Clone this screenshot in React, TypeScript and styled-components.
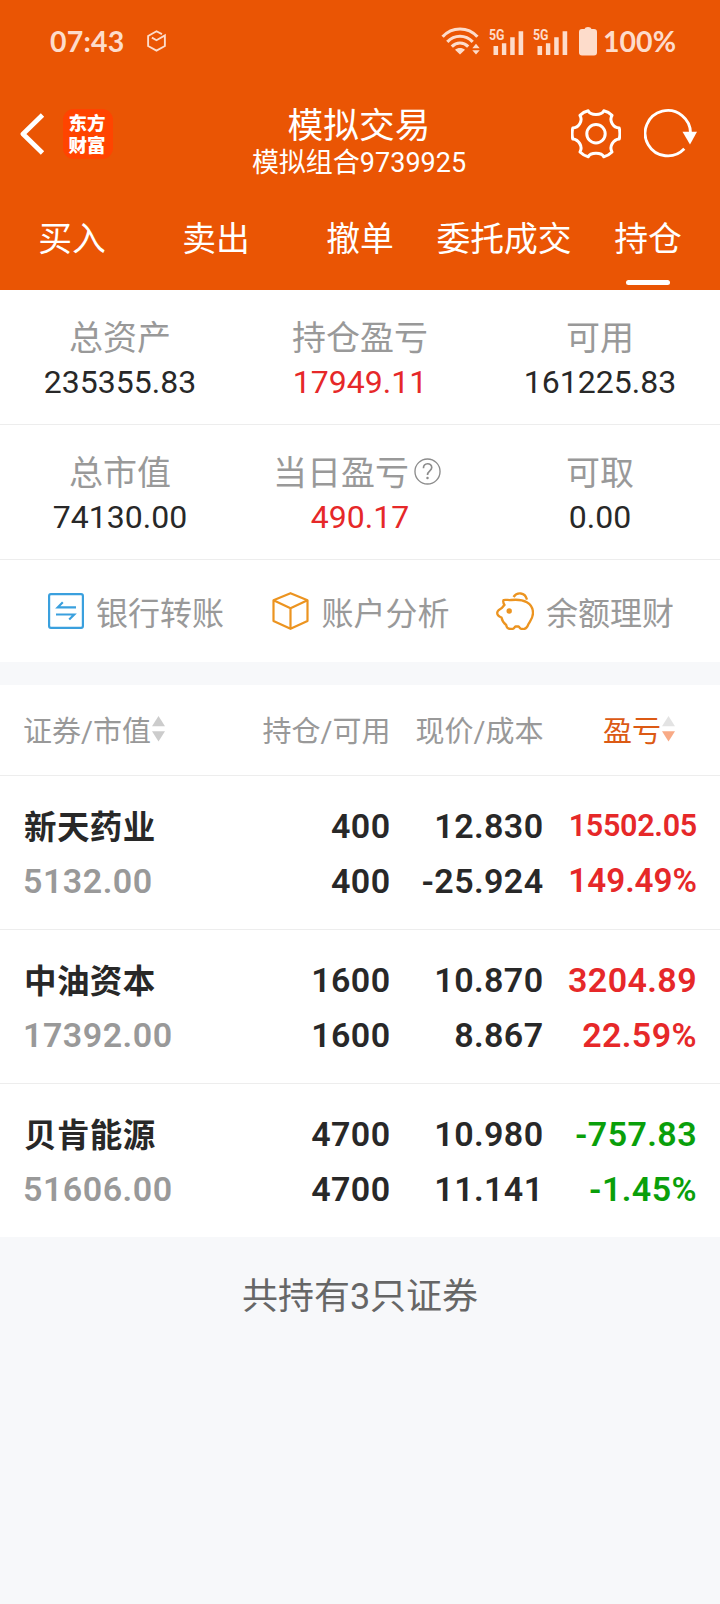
import React from "react";
import styled, { createGlobalStyle } from "styled-components";

const GlobalStyle = createGlobalStyle`
  * { box-sizing: border-box; }
  html, body { margin: 0; padding: 0; background: #f7f8fa; }
  body { font-family: Roboto, "Noto Sans CJK SC", sans-serif; color: #282828; }
`;

const RED = "#e62829";
const GREEN = "#0a9f0a";
const GRAY = "#999999";

const Screen = styled.main`
  width: 720px;
  min-height: 1604px;
  background: #f7f8fa;
  display: flex;
  flex-direction: column;
`;

const Header = styled.header`
  height: 290px;
  background: #ea5504;
  color: #fff;
`;

const StatusBar = styled.div`
  height: 82px;
  padding: 0 44px 0 50px;
  display: flex;
  align-items: center;
  justify-content: space-between;
  color: #fddccb;
  font-family: Lato, sans-serif;
  font-weight: 700;
  font-size: 28.5px;
`;

const StatusGroup = styled.div<{ $gap: number }>`
  display: flex;
  align-items: center;
  gap: ${(p) => p.$gap}px;
  svg { display: block; }
`;

const Clock = styled.span`
  letter-spacing: 0.2px;
`;

const BatteryGroup = styled.div`
  display: flex;
  align-items: center;
  gap: 6px;
  margin-left: 2px;
`;

const NavBar = styled.div`
  height: 104px;
  padding: 0 22px 0 20px;
  display: grid;
  grid-template-columns: 1fr auto 1fr;
  align-items: center;
  svg { display: block; }
`;

const NavLeft = styled.div`
  display: flex;
  align-items: center;
  gap: 18px;
  padding-bottom: 1px;
`;

const NavRight = styled.div`
  display: flex;
  align-items: center;
  justify-content: flex-end;
  gap: 23px;
  padding-bottom: 1px;
`;

const BrandBadge = styled.div`
  width: 50px;
  height: 50px;
  border-radius: 11px;
  background: #ff4400;
  padding: 2px 7px 2px 5px;
  text-align: center;
  word-break: break-all;
  font: 900 18.5px/22px "Noto Sans CJK SC", sans-serif;
`;

const TitleBlock = styled.div`
  padding-top: 16px;
  text-align: center;
`;

const Title = styled.h1`
  margin: 0;
  font-size: 35.7px;
  line-height: 42px;
  font-weight: 400;
`;

const Subtitle = styled.div`
  font-size: 27px;
  line-height: 32px;
`;

const Tabs = styled.nav`
  height: 104px;
  display: grid;
  grid-template-columns: repeat(5, 1fr);
`;

const Tab = styled.div<{ $active?: boolean }>`
  display: flex;
  flex-direction: column;
  align-items: center;
  justify-content: space-between;
  padding: 29px 0 5px;
  font-size: 33.8px;
  line-height: 50px;
  white-space: nowrap;
  &::after {
    content: "";
    width: 44px;
    height: 5px;
    border-radius: 2.5px;
    background: ${(p) => (p.$active ? "#fff" : "transparent")};
  }
`;

const StatRow = styled.section`
  height: 135px;
  padding-top: 25px;
  background: #fff;
  border-bottom: 1px solid #ededed;
  display: grid;
  grid-template-columns: repeat(3, 1fr);
`;

const Stat = styled.div`
  display: flex;
  flex-direction: column;
  align-items: center;
`;

const StatLabel = styled.div<{ $help?: boolean }>`
  display: flex;
  align-items: center;
  gap: 5px;
  height: 46px;
  margin-right: ${(p) => (p.$help ? 6 : 0)}px;
  font-size: 34px;
  line-height: 46px;
  color: ${GRAY};
  svg { display: block; margin-bottom: 4px; }
`;

const StatValue = styled.div<{ $color?: string }>`
  font-size: 32px;
  line-height: 42px;
  color: ${(p) => p.$color ?? "#282828"};
`;

const Shortcuts = styled.section`
  height: 102px;
  padding: 0 24px;
  background: #fff;
  display: grid;
  grid-template-columns: repeat(3, 1fr);
`;

const Shortcut = styled.div`
  display: flex;
  align-items: center;
  justify-content: center;
  gap: 12px;
  font-size: 32px;
  color: ${GRAY};
  svg { display: block; }
  & + & { padding-left: 2px; }
`;

const Holdings = styled.section`
  margin-top: 23px;
  background: #fff;
`;

const Row = styled.div`
  padding: 0 23px;
  display: grid;
  grid-template-columns: 214.5px 153px 153px 153.5px;
`;

const HeadRow = styled(Row)`
  height: 91px;
  padding-bottom: 2px;
  align-items: center;
  font-size: 29px;
  color: ${GRAY};
  border-bottom: 1px solid #ededed;
`;

const HeadCell = styled.div<{ $right?: boolean; $active?: boolean }>`
  display: flex;
  align-items: center;
  justify-content: ${(p) => (p.$right ? "flex-end" : "flex-start")};
  gap: 1px;
  padding-right: ${(p) => (p.$active ? 22 : 0)}px;
  color: ${(p) => (p.$active ? "#dc5a14" : "inherit")};
  white-space: nowrap;
`;

const HoldingRow = styled(Row)`
  height: 154px;
  padding-top: 23px;
  border-bottom: 1px solid #ededed;
  &:last-child { border-bottom: 0; height: 153px; }
`;

const Cell = styled.div<{ $right?: boolean; $color?: string }>`
  display: flex;
  flex-direction: column;
  align-items: ${(p) => (p.$right ? "flex-end" : "flex-start")};
  color: ${(p) => p.$color ?? "#282828"};
`;

const Line = styled.div<{ $color?: string; $size?: number; $spacing?: number }>`
  height: 55px;
  line-height: 54px;
  font-size: ${(p) => p.$size ?? 34}px;
  font-weight: 600;
  letter-spacing: ${(p) => p.$spacing ?? 0.4}px;
  color: ${(p) => p.$color ?? "inherit"};
  white-space: nowrap;
`;

const StockName = styled(Line)`
  padding: 2px 0 0 1px;
  font-weight: 700;
`;

const Summary = styled.footer`
  padding-top: 35px;
  text-align: center;
  font-size: 36px;
  line-height: 50px;
  color: #666;
`;

const CubeBadgeIcon = () => (
  <svg width="19" height="22" viewBox="0 0 18 21" fill="none" stroke="currentColor" strokeWidth="1.8">
    <path d="M14.2 4 9 1.2 1 5.7v9.6l8 4.4 8-4.4V5.2L9 9.8 4.6 7.3" />
  </svg>
);

const WifiIcon = () => (
  <svg width="39" height="28" viewBox="0 0 39 28" fill="none" stroke="currentColor" strokeWidth="3.2">
    <path d="M1.6 9.8C11-.6 27-.6 36.4 9.8M6.3 14.8c7.2-7.4 18.2-7.4 25.4 0M10.8 19.6c4.8-4.8 11.6-4.8 16.4 0" />
    <path d="M14 22.8c2.8-2.3 7.2-2.3 10 0L19 27.6ZM31.3 21.2l3.7-4.4 3.7 4.4ZM31.3 23.2h7.4L35 27.6Z" fill="currentColor" stroke="none" />
  </svg>
);

const SignalIcon = () => (
  <svg width="35" height="30" viewBox="0 -4 35 30" fill="currentColor" overflow="visible">
    <text x="0" y="10.4" fontSize="14" fontFamily="Roboto, sans-serif" fontWeight="700" textLength="15.5" lengthAdjust="spacingAndGlyphs">5G</text>
    <path d="M4.5 16h4.6v9H4.5ZM12.9 13.2h4.4V25h-4.4ZM21.2 7.3h4.5V25h-4.5ZM29.6 1.2h4.6V25h-4.6Z" />
  </svg>
);

const BatteryIcon = () => (
  <svg width="18" height="29" viewBox="0 0 18 29" fill="currentColor">
    <path d="M5.5 2Q6 0 9 0t3.5 2H15q3 0 3 3v20.5q0 3-3 3H3q-3 0-3-3V5q0-3 3-3Z" />
  </svg>
);

const BackIcon = () => (
  <svg width="25" height="42" viewBox="0 0 25 42" fill="none" stroke="#fff" strokeWidth="4.8">
    <path d="M22.5 2 3 21l19.5 19" strokeLinejoin="round" />
  </svg>
);

const GearIcon = () => (
  <svg width="50" height="50" viewBox="0 0 50 50" fill="none" stroke="#fff" strokeWidth="3" strokeLinejoin="round">
    <path d="M17.2 1.8C19.5 6.6 30.5 6.6 32.8 1.8Q37.5 2.8 41 6.4C37.8 12 42.4 18.8 48.2 19Q49.6 25 48.2 30C42.4 30.5 37.8 37.5 41 43Q37.5 46.6 32.8 47.8C30.5 43 19.5 43 17.2 47.8Q12.5 46.6 9 43C12.2 37.5 7.6 30.5 1.8 30Q.4 25 1.8 19C7.6 18.8 12.2 12 9 6.4Q12.5 2.8 17.2 1.8Z" />
    <circle cx="25" cy="24.7" r="9.2" />
  </svg>
);

const RefreshIcon = () => (
  <svg width="54" height="50" viewBox="0 0 54 50" fill="none" stroke="#fff" strokeWidth="2.8">
    <path d="M46.5 25A22.7 22.7 0 1 0 40.3 39.8" />
    <path d="M38.5 22.8H53L46 35.6Z" fill="#fff" stroke="none" />
  </svg>
);

const HelpIcon = () => (
  <svg width="27" height="27" viewBox="0 0 28 28" fill="none" stroke="#8c8c8c" strokeWidth="1.4">
    <circle cx="14" cy="14" r="13" />
    <path d="M9.8 10.5c0-6 8.6-6 8.6-.6 0 3.3-4.4 3.6-4.4 7.6" strokeWidth="1.7" />
    <circle cx="14" cy="20.8" r="1.3" fill="#8c8c8c" stroke="none" />
  </svg>
);

const TransferIcon = () => (
  <svg width="36" height="36" viewBox="0 0 36 36" fill="none" stroke="#3aa0de" strokeWidth="2.2">
    <rect x="1.1" y="1.1" width="33.8" height="33.8" rx="1.8" />
    <path d="M28 14.3H9.8l5-5M8 21.5h18.2l-5 5" />
  </svg>
);

const BoxIcon = () => (
  <svg width="37" height="38" viewBox="0 0 37 38" fill="none" stroke="#ec9420" strokeWidth="2.2" strokeLinejoin="round">
    <path d="M18.5 1.2 35.5 8.2V29L18.5 36.8 1.5 29V8.2ZM1.5 8.2l17 8 17-8M18.5 16.2V37" />
  </svg>
);

const PiggyIcon = () => (
  <svg width="38" height="38" viewBox="0 0 38 38" fill="none" stroke="#ec9420" strokeWidth="2.3" strokeLinejoin="round">
    <path d="M7.5 8c2.5-.6 5 .4 7.5 0 13-1.4 22 3 22 13 0 5-2.5 7.5-4.5 11-1.3 3.5-2.5 5.5-6 5-2.5.2-2.5-1.5-4-2.5h-3c-1.5 1-1.5 2.7-4 2.5-3 .2-5-.5-5.300-4C7.5 31 6 28.5 5.5 25.5 3 24.5 1.2 23.5 1.2 21c0-2.5 1.5-3 3.5-4.2C7 15.5 7 14 8.5 13 7 11 7 9.5 7.5 8Z" />
    <path d="M17.5 5c3.5-5.2 11.5-5 13.5 2.6" />
    <circle cx="13.2" cy="19" r="2.7" fill="#ec9420" stroke="none" />
  </svg>
);

const SortIcon = ({ up, down }: { up: string; down: string }) => (
  <svg width="13" height="26" viewBox="0 0 13 26">
    <path d="M6.5 0 13 10.3H0Z" fill={up} />
    <path d="M6.5 25.5 13 15.2H0Z" fill={down} />
  </svg>
);

const tabs = ["买入", "卖出", "撤单", "委托成交", "持仓"];

const stats = [
  [
    { label: "总资产", value: "235355.83" },
    { label: "持仓盈亏", value: "17949.11", color: RED },
    { label: "可用", value: "161225.83" },
  ],
  [
    { label: "总市值", value: "74130.00" },
    { label: "当日盈亏", value: "490.17", color: RED, help: true },
    { label: "可取", value: "0.00" },
  ],
];

const shortcuts = [
  { label: "银行转账", Icon: TransferIcon },
  { label: "账户分析", Icon: BoxIcon },
  { label: "余额理财", Icon: PiggyIcon },
];

const holdings = [
  { name: "新天药业", value: "5132.00", qty: "400", price: "12.830", cost: "-25.924", profit: "15502.05", rate: "149.49%", color: RED },
  { name: "中油资本", value: "17392.00", qty: "1600", price: "10.870", cost: "8.867", profit: "3204.89", rate: "22.59%", color: RED },
  { name: "贝肯能源", value: "51606.00", qty: "4700", price: "10.980", cost: "11.141", profit: "-757.83", rate: "-1.45%", color: GREEN },
];

export default function App() {
  return (
    <Screen>
      <GlobalStyle />
      <Header>
        <StatusBar>
          <StatusGroup $gap={23}>
            <Clock>07:43</Clock>
            <CubeBadgeIcon />
          </StatusGroup>
          <StatusGroup $gap={9}>
            <WifiIcon />
            <SignalIcon />
            <SignalIcon />
            <BatteryGroup>
              <BatteryIcon />
              <span>100%</span>
            </BatteryGroup>
          </StatusGroup>
        </StatusBar>
        <NavBar>
          <NavLeft>
            <BackIcon />
            <BrandBadge>东方财富</BrandBadge>
          </NavLeft>
          <TitleBlock>
            <Title>模拟交易</Title>
            <Subtitle>模拟组合9739925</Subtitle>
          </TitleBlock>
          <NavRight>
            <GearIcon />
            <RefreshIcon />
          </NavRight>
        </NavBar>
        <Tabs>
          {tabs.map((t) => (
            <Tab key={t} $active={t === "持仓"}>{t}</Tab>
          ))}
        </Tabs>
      </Header>

      {stats.map((row, i) => (
        <StatRow key={i}>
          {row.map((s) => (
            <Stat key={s.label}>
              <StatLabel $help={"help" in s}>
                {s.label}
                {"help" in s && <HelpIcon />}
              </StatLabel>
              <StatValue $color={"color" in s ? s.color : undefined}>{s.value}</StatValue>
            </Stat>
          ))}
        </StatRow>
      ))}

      <Shortcuts>
        {shortcuts.map(({ label, Icon }) => (
          <Shortcut key={label}>
            <Icon />
            <span>{label}</span>
          </Shortcut>
        ))}
      </Shortcuts>

      <Holdings>
        <HeadRow>
          <HeadCell>
            证券/市值
            <SortIcon up="#cccccc" down="#cccccc" />
          </HeadCell>
          <HeadCell $right>持仓/可用</HeadCell>
          <HeadCell $right>现价/成本</HeadCell>
          <HeadCell $right $active>
            盈亏
            <SortIcon up="#e3e3e3" down="#f8aa86" />
          </HeadCell>
        </HeadRow>
        {holdings.map((h) => (
          <HoldingRow key={h.name}>
            <Cell>
              <StockName $size={32.5}>{h.name}</StockName>
              <Line $color={GRAY} $spacing={0.5}>{h.value}</Line>
            </Cell>
            <Cell $right>
              <Line>{h.qty}</Line>
              <Line>{h.qty}</Line>
            </Cell>
            <Cell $right>
              <Line>{h.price}</Line>
              <Line>{h.cost}</Line>
            </Cell>
            <Cell $right $color={h.color}>
              <Line $size={h.profit.length > 7 ? 30.5 : 34} $spacing={h.profit.length > 7 ? -0.3 : 0.4}>{h.profit}</Line>
              <Line $size={h.rate.length > 6 ? 33.2 : 34} $spacing={h.rate.length > 6 ? 0 : 0.4}>{h.rate}</Line>
            </Cell>
          </HoldingRow>
        ))}
      </Holdings>

      <Summary>共持有3只证券</Summary>
    </Screen>
  );
}
